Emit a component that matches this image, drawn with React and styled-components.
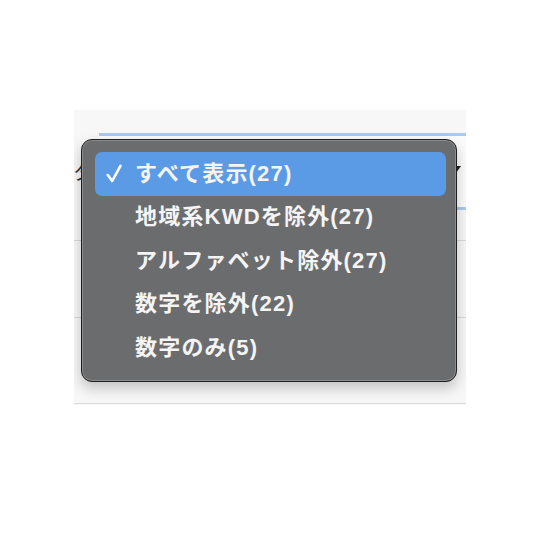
import React from "react";
import styled, { createGlobalStyle } from "styled-components";

const GlobalStyle = createGlobalStyle`
  html, body {
    margin: 0;
    padding: 0;
    background: #ffffff;
  }
  body {
    font-family: "Noto Sans CJK JP", "Noto Sans", sans-serif;
  }
`;

const options = [
  { label: "すべて表示(27)", selected: true },
  { label: "地域系KWDを除外(27)" },
  { label: "アルファベット除外(27)" },
  { label: "数字を除外(22)" },
  { label: "数字のみ(5)" },
];

export default function App() {
  return (
    <>
      <GlobalStyle />
      <Page>
        <Backdrop>
          <FieldRow>
            <Label>タ</Label>
            <Field>
              <Caret />
            </Field>
          </FieldRow>
          <Divider $height={31} />
          <Divider $height={77} />
          <Divider $height={86} />

          <Menu>
            {options.map((opt) => (
              <Item key={opt.label} $selected={opt.selected}>
                {opt.selected && (
                  <Check viewBox="0 0 16 19">
                    <path d="M1.8 11 L6.2 17 L14.5 1.8" />
                  </Check>
                )}
                {opt.label}
              </Item>
            ))}
          </Menu>
        </Backdrop>
      </Page>
    </>
  );
}

const Page = styled.div`
  width: 540px;
  height: 540px;
  padding: 110px 0 0 74px;
  box-sizing: border-box;
`;

const Backdrop = styled.div`
  position: relative;
  width: 392px;
  height: 295px;
  padding-top: 23px;
  box-sizing: border-box;
  background: #f7f7f7;
  overflow: hidden;
  display: flex;
  flex-direction: column;
`;

const FieldRow = styled.div`
  display: flex;
  align-items: center;
  height: 77px;
`;

const Label = styled.span`
  width: 26px;
  margin-left: -1px;
  font-size: 20px;
  color: #333;
  line-height: 1;
`;

const Field = styled.div`
  flex: 1;
  height: 77px;
  box-sizing: border-box;
  border-top: 3px solid #a9c9ef;
  border-bottom: 3px solid #a9c9ef;
  background: #fbfbfb;
  display: flex;
  align-items: center;
  justify-content: flex-end;
  padding-right: 5px;
`;

const Caret = styled.span`
  width: 0;
  height: 0;
  margin-top: -4px;
  border-left: 5px solid transparent;
  border-right: 5px solid transparent;
  border-top: 7px solid #222;
`;

const Divider = styled.div`
  height: ${(p) => p.$height}px;
  flex-shrink: 0;
  box-sizing: border-box;
  border-bottom: 1px solid #d9d9d9;
`;

const Menu = styled.div`
  position: absolute;
  left: 7px;
  top: 29px;
  width: 376px;
  box-sizing: border-box;
  padding: 12px 10px 11px 13px;
  background: #6b6c6e;
  border: 1px solid #1f1f20;
  border-radius: 11px;
  box-shadow: inset 0 0 0 1px rgba(255, 255, 255, 0.22),
    0 6px 14px rgba(0, 0, 0, 0.22);
`;

const Item = styled.div`
  position: relative;
  height: 43.5px;
  box-sizing: border-box;
  display: flex;
  align-items: center;
  padding: 0 0 6px 40px;
  border-radius: 7px;
  background: ${(p) => (p.$selected ? "#5b9be6" : "transparent")};
  color: #f4f4f4;
  font-family: "Liberation Sans", "Noto Sans CJK JP", sans-serif;
  font-size: 22px;
  font-weight: 700;
  letter-spacing: 1.2px;
  white-space: nowrap;
`;

const Check = styled.svg`
  position: absolute;
  left: 11px;
  top: 12px;
  width: 16px;
  height: 19px;
  fill: none;
  stroke: #ffffff;
  stroke-width: 2.6;
  stroke-linecap: round;
  stroke-linejoin: round;
`;
